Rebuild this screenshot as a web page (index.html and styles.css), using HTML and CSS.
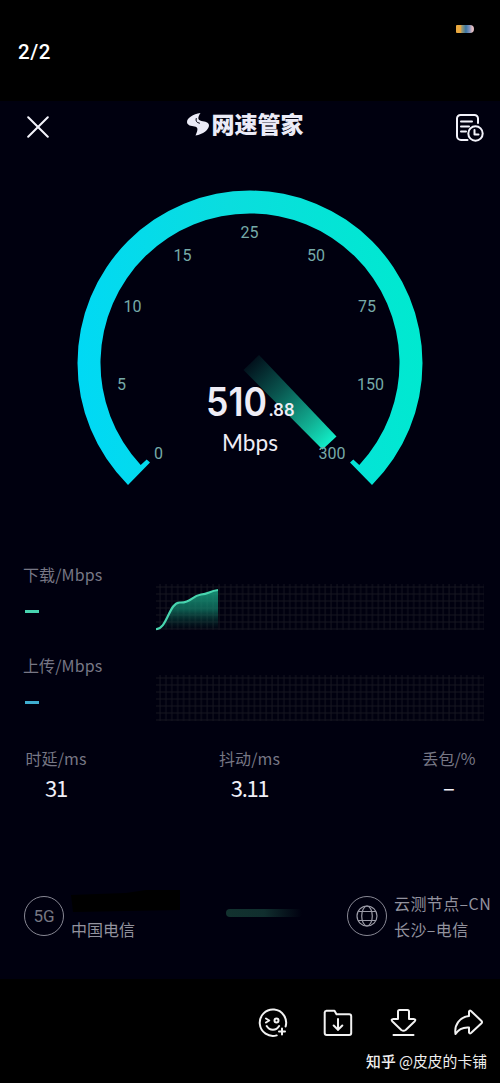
FILE: index.html
```html
<!DOCTYPE html>
<html lang="zh-CN">
<head>
<meta charset="utf-8">
<title>网速管家</title>
<link rel="stylesheet" href="styles.css">
</head>
<body>
<header class="viewer-top">
  <span class="battery"></span>
  <span class="page-count">2/2</span>
</header>
<main class="panel">
  <div class="titlebar">
    <svg class="close" width="22" height="22" viewBox="0 0 22 22"><path d="M1.2 1.2 20.8 20.8M20.8 1.2 1.2 20.8"/></svg>
    <div class="brand">
      <svg width="22" height="23" viewBox="0 0 22 23"><path d="M13.500 0C6 1 0 5 0 9C0 12.500 4.500 13 7.500 13.500C11 14.300 11.500 16 8.500 22.500C16 21.500 22 16.500 22 12.500C22 9 18 8.500 14.500 8C10.500 7.200 10.500 4.500 13.500 0Z"/><path class="notch" d="M9.200 5.500Q8 9.500 12.500 10.200"/></svg>
      <span>网速管家</span>
    </div>
    <svg class="history" width="28" height="28" viewBox="0 0 28 28"><path d="M11.500 26H5a4 4 0 0 1-4-4V4.500a3.500 3.500 0 0 1 3.500-3.500h14A3.500 3.500 0 0 1 22 4.500V9M5 7.500h11M5 12.500h8M5 17.500h5"/><circle cx="19.500" cy="19.500" r="7.200"/><path d="M18.500 16v4.500h4"/></svg>
  </div>

  <svg class="gauge" width="500" height="380" viewBox="0 150 500 380">
    <defs>
      <linearGradient id="arc" gradientUnits="userSpaceOnUse" x1="78" y1="400" x2="422" y2="360"><stop offset="0" stop-color="#00d9f5"/><stop offset=".5" stop-color="#0addde"/><stop offset="1" stop-color="#00e9d0"/></linearGradient>
      <linearGradient id="needle" gradientUnits="userSpaceOnUse" x1="251" y1="363" x2="330" y2="443"><stop offset="0" stop-color="#18ddb5" stop-opacity=".08"/><stop offset=".35" stop-color="#18ddb5" stop-opacity=".38"/><stop offset=".75" stop-color="#16dfb7" stop-opacity=".78"/><stop offset="1" stop-color="#11efc9"/></linearGradient>
    </defs>
    <path fill="url(#arc)" d="M128 485A172.500 172.500 0 1 1 372 485L350 462.500 353.300 459.500 359.300 465A149.500 149.500 0 1 0 140.700 465L146.700 459.500 150 462.500Z"/>
    <path fill="url(#needle)" d="M259 355 336.500 436.500 322.500 449.500 243.500 370Z"/>
    <g class="ticks">
      <text x="158.500" y="459">0</text>
      <text x="121.500" y="390">5</text>
      <text x="132.500" y="312">10</text>
      <text x="182.500" y="261">15</text>
      <text x="249.500" y="238">25</text>
      <text x="316" y="261">50</text>
      <text x="367" y="312">75</text>
      <text x="370.500" y="390">150</text>
      <text x="332" y="459">300</text>
    </g>
    <text class="readout" y="416"><tspan class="speed" x="206" textLength="61" lengthAdjust="spacingAndGlyphs">510</tspan><tspan class="decimal" x="268.500" textLength="26" lengthAdjust="spacingAndGlyphs">.88</tspan></text>
    <text class="unit" x="222" y="451" textLength="56" lengthAdjust="spacingAndGlyphs">Mbps</text>
  </svg>

  <section class="rate">
    <div class="rate-info"><span class="label">下载/Mbps</span><i class="dash green"></i></div>
    <svg class="chart" width="328" height="48" viewBox="0 0 328 48">
      <defs>
        <pattern id="grid" width="5.900" height="7" patternUnits="userSpaceOnUse"><path d="M4 0V7M0 3H5.900" stroke="#151520" stroke-width="1" fill="none"/></pattern>
        <linearGradient id="area" x1="0" y1="0" x2="0" y2="1"><stop offset="0" stop-color="#19a584" stop-opacity=".85"/><stop offset=".5" stop-color="#148c72" stop-opacity=".65"/><stop offset="1" stop-color="#0b5145" stop-opacity=".05"/></linearGradient>
      </defs>
      <rect width="328" height="46" fill="url(#grid)"/>
      <path fill="url(#area)" d="M0 45C11 46 13 18 24 18.500C36 19 35 12 45 10.500C53 10 53 7 62 6V45Z"/>
      <path class="curve" d="M0 45C11 46 13 18 24 18.500C36 19 35 12 45 10.500C53 10 53 7 62 6"/>
    </svg>
  </section>
  <section class="rate">
    <div class="rate-info"><span class="label">上传/Mbps</span><i class="dash blue"></i></div>
    <svg class="chart" width="328" height="48" viewBox="0 0 328 48"><rect width="328" height="46" fill="url(#grid)"/></svg>
  </section>

  <section class="metrics">
    <div class="metric"><span class="label">时延/ms</span><b>31</b></div>
    <div class="metric"><span class="label">抖动/ms</span><b>3.11</b></div>
    <div class="metric"><span class="label">丢包/%</span><b class="empty">–</b></div>
  </section>

  <section class="route">
    <div class="badge">5G</div>
    <div class="carrier">
      <svg width="112" height="24" viewBox="0 0 112 24"><path d="M0 5 55 3 75 0H109V20L2 22Z"/></svg>
      <span>中国电信</span>
    </div>
    <div class="link"></div>
    <div class="badge">
      <svg width="22" height="22" viewBox="0 0 22 22"><circle cx="11" cy="11" r="10"/><ellipse cx="11" cy="11" rx="5.300" ry="10"/><path d="M2 6.500h18M2 15.500h18"/></svg>
    </div>
    <div class="node"><span>云测节点–CN</span><span>长沙–电信</span></div>
  </section>
</main>
<footer class="actions">
  <div class="icons">
    <svg width="30" height="30" viewBox="0 0 30 30"><path d="M18.700 27.400A13.200 13.200 0 1 1 27.600 18.500M8 10.500l3.200 2-3.200 2M8.700 18c3 5 9.500 5 12.400 0M24 20.500v6M21 23.500h6"/><circle cx="18.500" cy="12.400" r="2"/></svg>
    <svg width="30" height="30" viewBox="0 0 30 30"><path d="M3.500 2.800h8l2 3.500h12.700a2 2 0 0 1 2 2V25a2 2 0 0 1-2 2H3.700a2 2 0 0 1-2-2V4.500a2 2 0 0 1 1.800-1.700M15 11v11M10.700 17.500l4.300 4.300 4.300-4.300"/></svg>
    <svg width="30" height="30" viewBox="0 0 30 30"><path d="M11.500 2h8a1.500 1.500 0 0 1 1.500 1.500V11h4.500q3 .2 1 2.500l-8.800 8.500q-2.200 1.500-4.400 0L4.500 13.500q-2-2.300 1-2.500H10V3.500A1.500 1.500 0 0 1 11.500 2M5.500 27h20"/></svg>
    <svg width="30" height="30" viewBox="0 0 30 30"><path d="M16 8V3.500q.5-1.500 2-.5l10.500 10q1 1.200 0 2.200L18 25q-1.500 1-2-.5V19.500C9 19 5 22 2.500 26 1 16.500 7 9 16 8Z"/></svg>
  </div>
  <div class="credit"><b>知乎</b> @皮皮的卡铺</div>
</footer>
</body>
</html>
```
FILE: styles.css
```css
* { box-sizing: border-box; }
body {
  margin: 0;
  width: 500px;
  height: 1083px;
  overflow: hidden;
  background: #000;
  color: #efeff5;
  font-family: Roboto, "Noto Sans CJK SC", sans-serif;
}
svg { display: block; flex: none; }
.viewer-top { height: 101px; padding: 25px 26px 0 18px; display: flex; flex-direction: column; }
.battery {
  align-self: flex-end;
  width: 18px;
  height: 8px;
  border-radius: 1px 4px 4px 1px;
  background: linear-gradient(90deg, #e9a83f 0 25%, #9d9b72 32%, #3976a4 55%, #8292bc 75%, #e1bdc2 90%);
}
.page-count { margin-top: 6px; font: 500 20.5px/26px Roboto, sans-serif; letter-spacing: .6px; color: #fff; }
.panel { height: 878px; background: #00000f; }
.titlebar { height: 49px; padding: 0 16px 0 27px; display: flex; justify-content: space-between; align-items: center; }
.titlebar svg { stroke: #f3f3fb; fill: none; stroke-width: 2; stroke-linecap: round; stroke-linejoin: round; }
.titlebar .close { margin-top: 3px; }
.titlebar .history { margin-top: 4px; }
.brand { display: flex; align-items: center; gap: 3px; font: 900 23px/32px "Noto Sans CJK SC", sans-serif; color: #ebebf7; margin: 0 15px 5px 0; }
.titlebar .brand svg { stroke: none; fill: #ebebf7; margin-top: 2px; }
.brand .notch { fill: none; stroke: #00000f; stroke-width: 1; }
.gauge { height: 380px; }
.ticks { font-family: Roboto, sans-serif; font-size: 16px; fill: #76aaa8; text-anchor: middle; }
.readout { font-family: Inter, sans-serif; font-weight: 600; fill: #efedf6; }
.speed { font-size: 39px; }
.decimal { font-size: 17px; }
.unit { font: 400 23px Lato, sans-serif; fill: #efedf6; }
.rate { height: 91px; padding: 32px 16px 0 23px; display: flex; justify-content: space-between; }
.rate-info { display: flex; flex-direction: column; }
.label { font: 400 16px/24px "Noto Sans CJK SC", sans-serif; color: #777785; white-space: nowrap; letter-spacing: .1px; }
.dash { width: 14px; height: 3px; margin: 24px 0 0 2px; }
.green { background: #48d4b0; }
.blue { background: #3faed0; }
.chart { margin-top: 22px; }
.curve { stroke: #48d5af; stroke-width: 2.2; fill: none; }
.metrics { margin-top: 34px; height: 54px; padding: 0 25px; display: grid; grid-template-columns: 62px 1fr 52px; }
.metric { display: flex; flex-direction: column; align-items: center; }
.metric:nth-child(2) { padding-right: 11px; }
.metric b { font: 400 22px/34px "Noto Sans CJK SC", sans-serif; letter-spacing: -1.3px; color: #f0eff7; }
.metric .empty { line-height: 33px; letter-spacing: 0; }
.route { margin-top: 90px; height: 54px; padding-left: 24px; display: flex; align-items: flex-start; }
.badge { width: 40px; height: 40px; margin-top: 6px; border: 1.5px solid #888894; border-radius: 50%; display: flex; align-items: center; justify-content: center; flex: none; font-size: 17px; color: #777783; }
.badge svg { fill: none; stroke: #9b9ba7; stroke-width: 1.2; }
.carrier { width: 112px; margin-left: 7px; display: flex; flex-direction: column; }
.carrier path { fill: #000; }
.carrier span, .node span { font: 400 16px/26px "Noto Sans CJK SC", sans-serif; color: #92929e; white-space: nowrap; }
.carrier span { margin-top: 2px; }
.link { width: 76px; height: 8px; margin: 19px 45px 0 43px; border-radius: 4px; background: linear-gradient(90deg, #12322f, #102e2e 50%, #00000f); }
.node { margin: 0 0 0 7px; display: flex; flex-direction: column; letter-spacing: .4px; }
.actions { height: 104px; padding: 29px 13px 0 0; display: flex; flex-direction: column; align-items: flex-end; }
.icons { width: 225px; margin-right: 4px; display: flex; justify-content: space-between; }
.icons svg { fill: none; stroke: #f2f2f2; stroke-width: 2; stroke-linecap: round; stroke-linejoin: round; }
.credit { margin-top: 12px; font: 400 14.8px/22px "Noto Sans CJK SC", sans-serif; color: #eee; white-space: nowrap; }
.credit b { font-weight: 500; }
```
